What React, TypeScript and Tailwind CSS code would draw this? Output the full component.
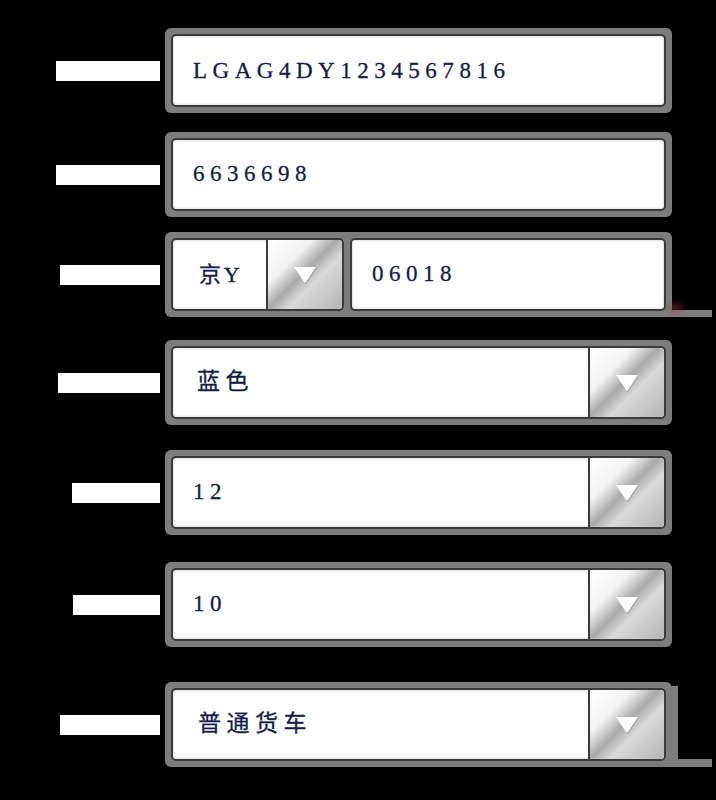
const font = { fontFamily: '"Liberation Serif", "Noto Sans CJK SC", serif' };

function Arrow() {
  return (
    <div className="flex h-full w-[76px] shrink-0 items-center justify-center rounded-r-[4px] border-l-2 border-[#3a3a3a] bg-[linear-gradient(135deg,#ffffff_0%,#f4f4f4_30%,#a9a9a9_48%,#d9d9d9_62%,#b4b4b4_100%)]">
      <svg width="28" height="20" viewBox="0 0 28 20">
        <path d="M3 2 L25 2 L15 17 Q14 18.5 13 17 Z" fill="#8a8a8a" transform="translate(0.6 1.2)" opacity="0.6" />
        <path d="M3 2 L25 2 L15 17 Q14 18.5 13 17 Z" fill="#ffffff" />
      </svg>
    </div>
  );
}

function Label({ text, w }: { text: string; w: string }) {
  return (
    <div className="flex w-[160px] shrink-0 justify-end">
      <span className={`${w} h-[20px] overflow-hidden bg-white text-[14px] leading-[20px] text-white`}>{text}</span>
    </div>
  );
}

function Box({ children, className = "" }: { children: React.ReactNode; className?: string }) {
  return (
    <div className={`flex h-[73px] items-center overflow-hidden rounded-[5px] border-2 border-[#3a3a3a] bg-white shadow-[inset_0_0_3px_rgba(0,0,0,0.25)] ${className}`}>
      {children}
    </div>
  );
}

function Value({ v, cls = "" }: { v: string; cls?: string }) {
  return (
    <span
      className={`flex-1 pl-[20px] text-[23px] tracking-[0.24em] text-[#141d4a] [-webkit-text-stroke:0.3px_#141d4a] ${cls}`}
      style={font}
    >
      {v}
    </span>
  );
}

function Row({
  label,
  w,
  mt,
  children,
  extra,
}: {
  label: string;
  w: string;
  mt: string;
  children: React.ReactNode;
  extra?: React.ReactNode;
}) {
  return (
    <div className={`flex items-center gap-[5px] ${mt}`}>
      <Label text={label} w={w} />
      <div className="relative w-[507px] rounded-[6px] bg-[#7d7d7d] p-[6px]">
        {children}
        {extra}
      </div>
    </div>
  );
}

export default function App() {
  return (
    <div className="h-[800px] w-[716px] overflow-hidden bg-black pt-[28px]">
      <Row label="车辆识别代号：" w="w-[104px]" mt="">
        <Box>
          <Value v="LGAG4DY1234567816" cls="pt-[2px]" />
        </Box>
      </Row>
      <Row label="发动机号：" w="w-[104px]" mt="mt-[19px]">
        <Box>
          <Value v="6636698" />
        </Box>
      </Row>
      <Row
        label="车牌号码："
        w="w-[100px]"
        mt="mt-[15px]"
        extra={
          <>
            <div className="absolute bottom-0 left-[500px] h-[7px] w-[47px] bg-[#7d7d7d]" />
            <div className="absolute bottom-[5px] left-[503px] h-[8px] w-[14px] rounded-full bg-[#a04040] opacity-50 blur-[3px]" />
          </>
        }
      >
        <div className="flex gap-[6px]">
          <Box className="w-[173px] shrink-0">
            <span
              className="flex-1 pl-[26px] text-[22px] tracking-[0.12em] text-[#141d4a] [-webkit-text-stroke:0.3px_#141d4a]"
              style={font}
            >
              京Y
            </span>
            <Arrow />
          </Box>
          <Box className="flex-1">
            <Value v="06018" />
          </Box>
        </div>
      </Row>
      <Row label="车牌颜色：" w="w-[102px]" mt="mt-[23px]">
        <Box>
          <Value v="蓝色" cls="pl-[24px] text-[22px] tracking-[0.12em]" />
          <Arrow />
        </Box>
      </Row>
      <Row label="总质量：" w="w-[88px]" mt="mt-[25px]">
        <Box>
          <Value v="12" />
          <Arrow />
        </Box>
      </Row>
      <Row label="整备质量：" w="w-[87px]" mt="mt-[27px]">
        <Box>
          <Value v="10" />
          <Arrow />
        </Box>
      </Row>
      <Row
        label="车辆类型："
        w="w-[100px]"
        mt="mt-[35px]"
        extra={
          <>
            <div className="absolute right-[-6px] top-[4px] h-[76px] w-[6px] bg-[#7d7d7d]" />
            <div className="absolute bottom-0 left-[500px] h-[8px] w-[47px] bg-[#7d7d7d]" />
          </>
        }
      >
        <Box>
          <Value v="普通货车" cls="pl-[25px] text-[23px] tracking-[0.1em]" />
          <Arrow />
        </Box>
      </Row>
    </div>
  );
}
